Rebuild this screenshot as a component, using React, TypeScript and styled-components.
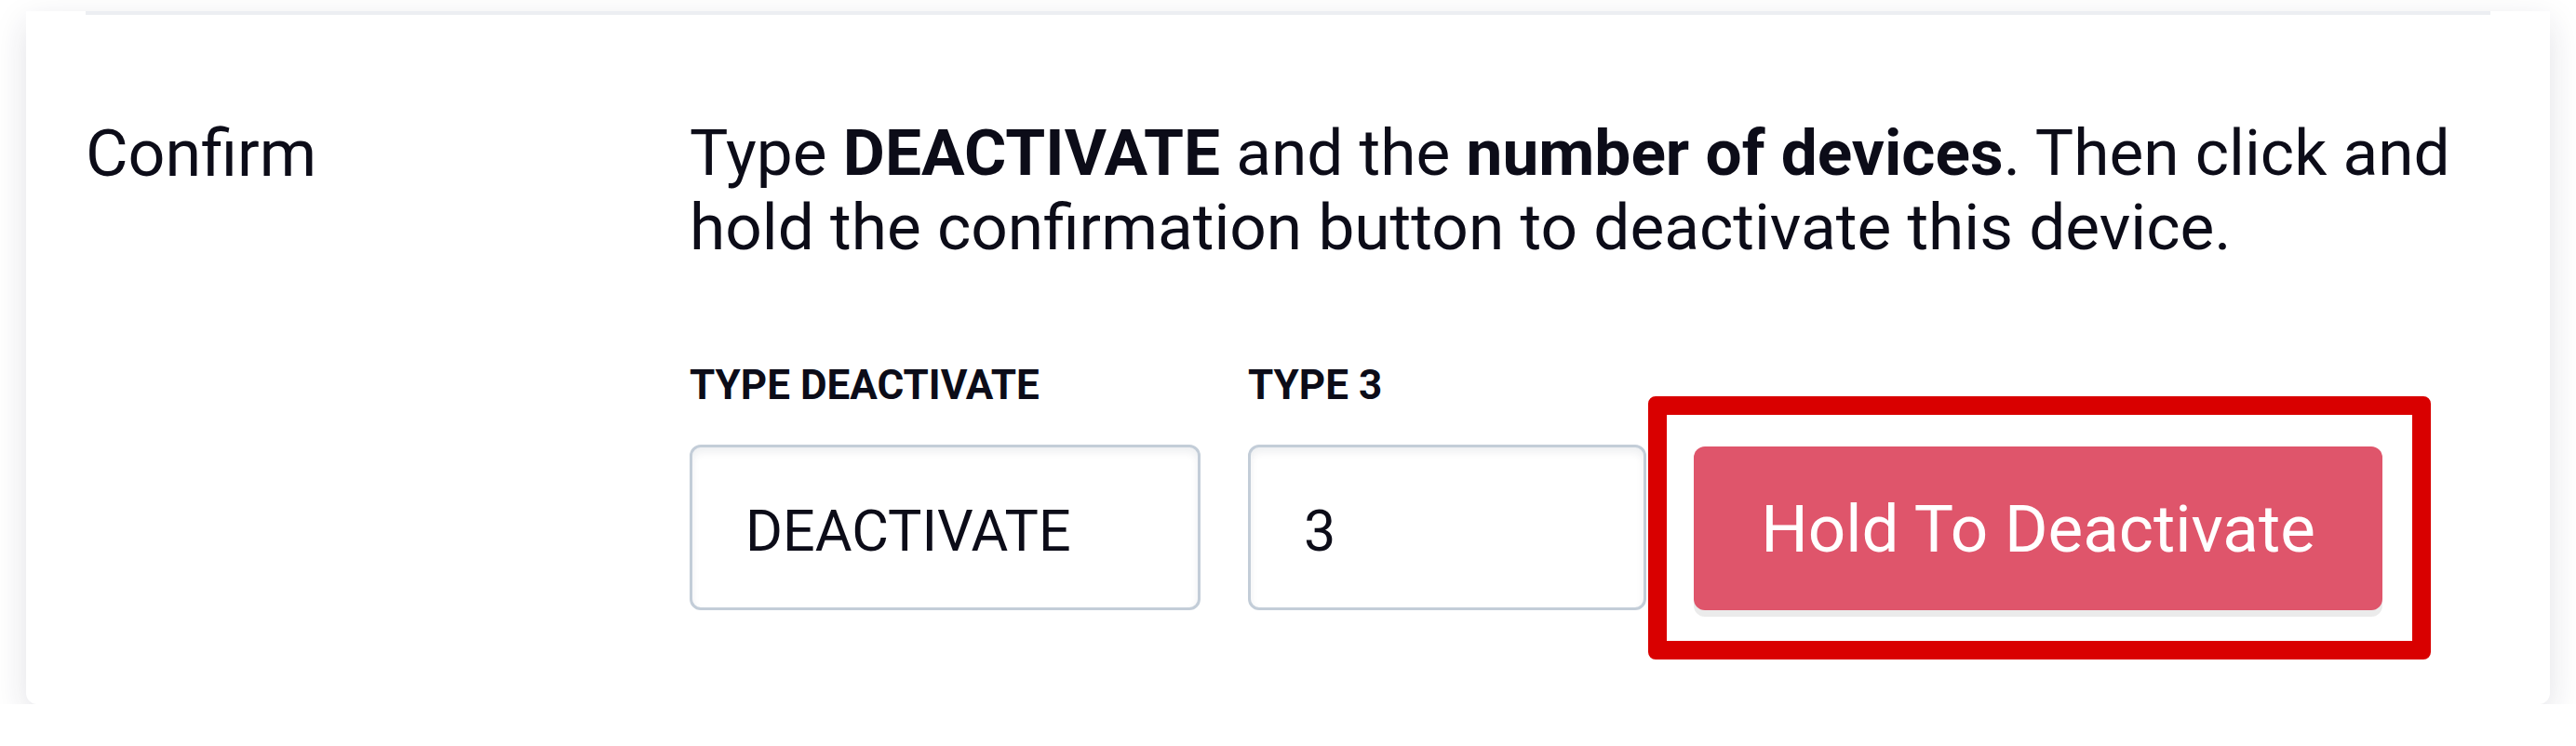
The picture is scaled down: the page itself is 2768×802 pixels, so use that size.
import styled, { createGlobalStyle } from "styled-components"

const GlobalStyle = createGlobalStyle`
  html, body {
    margin: 0;
    padding: 0;
    background: #ffffff;
  }
  body {
    font-family: Roboto, "Liberation Sans", sans-serif;
    color: #0c0c18;
  }
`

const App = () => {
  return (
    <>
      <GlobalStyle />
      <Page>
        <Card>
          <Divider />
          <ConfirmRow>
            <RowTitle>Confirm</RowTitle>
            <RowBody>
              <Instructions>
                Type <strong>DEACTIVATE</strong> and the <strong>number of devices</strong>. Then click and
                hold the confirmation button to deactivate this device.
              </Instructions>
              <FieldRow>
                <Field>
                  <FieldLabel>Type Deactivate</FieldLabel>
                  <TextInput width={549} defaultValue="DEACTIVATE" readOnly />
                </Field>
                <Field>
                  <FieldLabel>Type 3</FieldLabel>
                  <TextInput width={428} defaultValue="3" readOnly />
                </Field>
                <HoldButton type="button">Hold To Deactivate</HoldButton>
              </FieldRow>
            </RowBody>
          </ConfirmRow>
        </Card>
      </Page>
    </>
  )
}

const Page = styled.div`
  padding: 12px 28px 0;
`

const Card = styled.div`
  background: #ffffff;
  border-radius: 0 0 12px 12px;
  padding: 0 64px 101px;
  box-shadow: 0 12px 36px rgba(30, 30, 60, 0.13);
`

const Divider = styled.div`
  height: 4px;
  background: #eceef2;
`

const ConfirmRow = styled.div`
  display: grid;
  grid-template-columns: 649px 1fr;
  padding-top: 109px;
`

const RowTitle = styled.div`
  font-size: 70px;
  line-height: 80px;
`

const RowBody = styled.div`
  display: flex;
  flex-direction: column;
`

const Instructions = styled.p`
  margin: 0 0 103px;
  font-size: 69.4px;
  line-height: 80px;

  strong {
    font-weight: 700;
  }
`

const FieldRow = styled.div`
  display: flex;
  align-items: flex-end;
  gap: 51px;
`

const Field = styled.div`
  display: flex;
  flex-direction: column;
`

const FieldLabel = styled.label`
  font-size: 44px;
  line-height: 52px;
  font-weight: 700;
  text-transform: uppercase;
  margin-bottom: 38px;
`

const TextInput = styled.input<{ width: number }>`
  box-sizing: border-box;
  width: ${(props) => props.width}px;
  height: 178px;
  padding: 8px 57px 0;
  border: 3px solid #c3cdd8;
  border-radius: 12px;
  background: #ffffff;
  box-shadow: inset 0 5px 8px rgba(20, 30, 60, 0.07);
  font-family: Roboto, "Liberation Sans", sans-serif;
  font-size: 61px;
  color: #0c0c18;
  outline: none;
`

const HoldButton = styled.button`
  position: relative;
  box-sizing: border-box;
  width: 740px;
  height: 176px;
  border: none;
  border-radius: 12px;
  background: #df556b;
  box-shadow: 0 7px 0 #ebebeb;
  color: #ffffff;
  font-family: Roboto, "Liberation Sans", sans-serif;
  font-size: 71px;
  cursor: pointer;

  &::after {
    content: "";
    position: absolute;
    top: -54px;
    left: -49px;
    right: -52px;
    bottom: -53px;
    border: 20px solid #d90000;
    border-radius: 8px;
    pointer-events: none;
  }
`

export default App
